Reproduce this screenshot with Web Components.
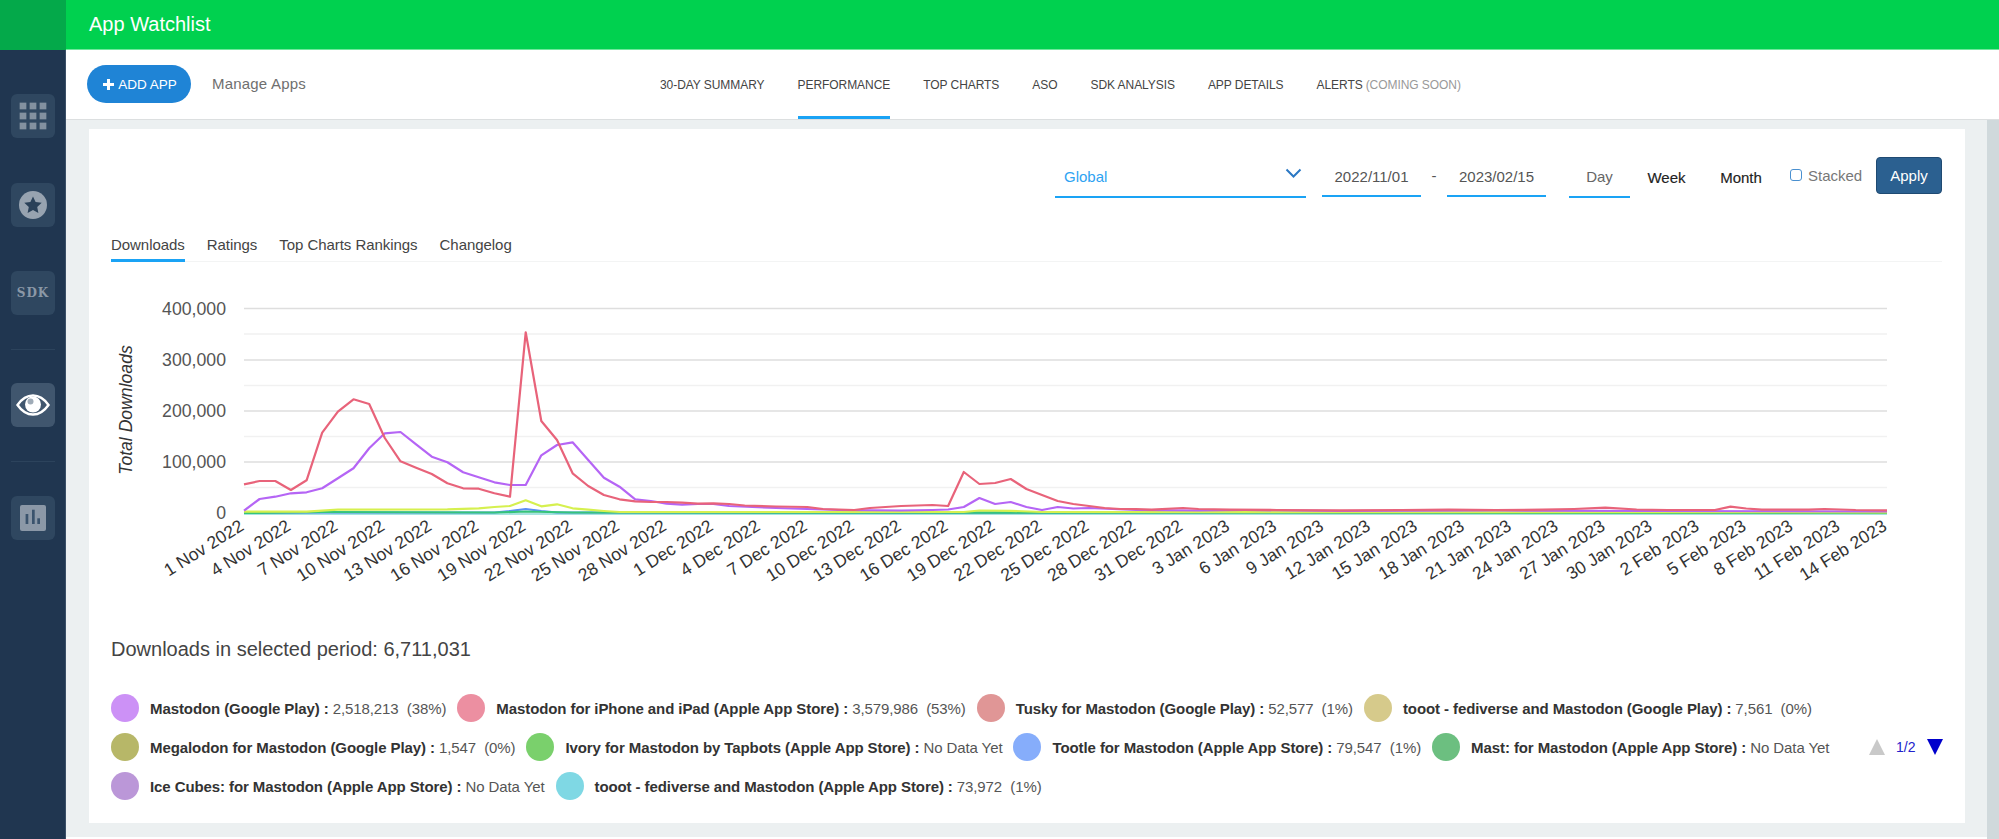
<!DOCTYPE html>
<html>
<head>
<meta charset="utf-8">
<title>App Watchlist</title>
<style>
  html, body { margin: 0; height: 839px; overflow: hidden; }
  body { font-family: "Liberation Sans", Arial, sans-serif; color: #333; background: #fff; }
  .page { display: flex; flex-direction: column; height: 839px; }
  .body-row { display: flex; flex: 1; min-height: 0; }
  .main { flex: 1; display: flex; flex-direction: column; min-width: 0; }
  .content-row { flex: 1; display: flex; min-height: 0; }
  .scrollbar { width: 12px; background: #d0d9dc; }
</style>
</head>
<body>
<div class="page">
  <app-header>App Watchlist</app-header>
  <div class="body-row">
    <side-bar>
      <side-tile style="margin-top:44px"><svg width="28" height="28" viewBox="0 0 28 28" fill="#8391a0"><rect x="0.650" y="0.650" width="6.700" height="6.700"/><rect x="10.650" y="0.650" width="6.700" height="6.700"/><rect x="20.650" y="0.650" width="6.700" height="6.700"/><rect x="0.650" y="10.650" width="6.700" height="6.700"/><rect x="10.650" y="10.650" width="6.700" height="6.700"/><rect x="20.650" y="10.650" width="6.700" height="6.700"/><rect x="0.650" y="20.650" width="6.700" height="6.700"/><rect x="10.650" y="20.650" width="6.700" height="6.700"/><rect x="20.650" y="20.650" width="6.700" height="6.700"/></svg></side-tile>
      <side-tile style="margin-top:45px"><svg width="28" height="28" viewBox="0 0 28 28"><circle cx="14" cy="14" r="14" fill="#97a3b0"/><path d="M14 5.500l2.600 5.600 6.100.7-4.500 4.200 1.200 6-5.400-3-5.400 3 1.200-6-4.500-4.200 6.100-.7z" fill="#2a4159"/></svg></side-tile>
      <side-tile style="margin-top:44px"><span class="sdk" style="font:bold 12px 'DejaVu Serif',serif;color:#8b98a7;letter-spacing:1px">SDK</span></side-tile>
      <side-rule style="margin-top:34px"></side-rule>
      <side-tile active style="margin-top:33px"><svg width="34" height="22" viewBox="0 0 34 22"><path d="M1.500 11C6 4.500 11 1.500 17 1.500S28 4.500 32.500 11C28 17.500 23 20.500 17 20.500S6 17.500 1.500 11Z" fill="none" stroke="#fff" stroke-width="2.400"/><circle cx="17" cy="10.500" r="8" fill="#fff"/><circle cx="14.500" cy="7.500" r="3" fill="#9fabb7"/></svg></side-tile>
      <side-rule style="margin-top:34px"></side-rule>
      <side-tile style="margin-top:34px"><svg width="26" height="26" viewBox="0 0 26 26"><rect width="26" height="26" rx="2" fill="#8b98a7"/><rect x="5.600" y="9" width="2.700" height="10" fill="#3a536d"/><rect x="12" y="4.700" width="2.700" height="14.300" fill="#3a536d"/><rect x="17.300" y="13.300" width="2.700" height="5.700" fill="#3a536d"/></svg></side-tile>
    </side-bar>
    <div class="main">
      <sub-nav></sub-nav>
      <div class="content-row">
        <watch-card>
          <filter-bar></filter-bar>
          <chart-tabs></chart-tabs>
          <downloads-chart></downloads-chart>
          <app-legend total="6,711,031">
            <legend-item color="#cc91f6" name="Mastodon (Google Play)">2,518,213 &nbsp;(38%)</legend-item>
            <legend-item color="#ec8fa1" name="Mastodon for iPhone and iPad (Apple App Store)">3,579,986 &nbsp;(53%)</legend-item>
            <legend-item color="#e09696" name="Tusky for Mastodon (Google Play)">52,577 &nbsp;(1%)</legend-item>
            <legend-item color="#d6ca8b" name="tooot - fediverse and Mastodon (Google Play)">7,561 &nbsp;(0%)</legend-item>
            <legend-item color="#b7b768" name="Megalodon for Mastodon (Google Play)">1,547 &nbsp;(0%)</legend-item>
            <legend-item color="#7ad06c" name="Ivory for Mastodon by Tapbots (Apple App Store)">No Data Yet</legend-item>
            <legend-item color="#86adfb" name="Tootle for Mastodon (Apple App Store)">79,547 &nbsp;(1%)</legend-item>
            <legend-item color="#6cbf80" name="Mast: for Mastodon (Apple App Store)">No Data Yet</legend-item>
            <legend-item color="#bb97d8" name="Ice Cubes: for Mastodon (Apple App Store)">No Data Yet</legend-item>
            <legend-item color="#7fd8e4" name="tooot - fediverse and Mastodon (Apple App Store)">73,972 &nbsp;(1%)</legend-item>
          </app-legend>
        </watch-card>
        <div class="scrollbar"></div>
      </div>
    </div>
  </div>
</div>

<script>
class AppHeader extends HTMLElement {
  constructor() {
    super();
    this.attachShadow({ mode: 'open' });
    this.shadowRoot.innerHTML = `
      <style>
        :host { display: flex; height: 50px; background: #00d14f; box-sizing: border-box; border-bottom: 1px solid #6fe79c; }
        .corner { width: 66px; background: #04a94a; margin-bottom: -1px; }
        .title { margin-left: 23px; color: #fff; font-size: 20px; line-height: 48px; }
      </style>
      <div class="corner"></div>
      <div class="title"><slot></slot></div>`;
  }
}
customElements.define('app-header', AppHeader);

class SideBar extends HTMLElement {
  constructor() {
    super();
    this.attachShadow({ mode: 'open' });
    this.shadowRoot.innerHTML = `
      <style>
        :host { display: flex; flex-direction: column; align-items: center; width: 66px; flex: none; background: #203650; box-shadow: inset -1px 0 0 #3b5068; }
      </style>
      <slot></slot>`;
  }
}
customElements.define('side-bar', SideBar);

class SideTile extends HTMLElement {
  constructor() {
    super();
    this.attachShadow({ mode: 'open' });
    this.shadowRoot.innerHTML = `
      <style>
        :host { display: flex; align-items: center; justify-content: center; width: 44px; height: 44px; border-radius: 6px; background: #2f4760; }
        :host([active]) { background: #40566e; }
      </style>
      <slot></slot>`;
  }
}
customElements.define('side-tile', SideTile);

class SideRule extends HTMLElement {
  constructor() {
    super();
    this.attachShadow({ mode: 'open' });
    this.shadowRoot.innerHTML = `<style>:host { display: block; width: 44px; height: 1px; background: #2c435c; }</style>`;
  }
}
customElements.define('side-rule', SideRule);

class SubNav extends HTMLElement {
  constructor() {
    super();
    this.attachShadow({ mode: 'open' });
    this.shadowRoot.innerHTML = `
      <style>
        :host { display: flex; align-items: stretch; height: 70px; flex: none; box-sizing: border-box; background: #fff; border-bottom: 1px solid #dcdfe0; padding-left: 21px; }
        .add { align-self: center; margin-top: -1px; width: 104px; height: 38px; border-radius: 19px; background: #1f84d6; color: #fff; font-size: 13.500px; display: flex; align-items: center; justify-content: center; gap: 4px; padding-left: 2px; box-sizing: border-box; }
        .add svg { display: block; }
        .manage { align-self: center; margin: -3px 0 0 21px; font-size: 15px; letter-spacing: .2px; color: #6f6f6f; width: 93px; white-space: nowrap; }
        nav { display: flex; gap: 33px; margin-left: 355px; font-size: 12px; letter-spacing: -.06px; color: #444; white-space: nowrap; }
        nav a { display: flex; align-items: center; padding-top: 3px; box-sizing: border-box; height: 69px; border-bottom: 3px solid transparent; }
        nav a.on { border-bottom-color: #1aa3f5; }
        nav em { font-style: normal; color: #999; margin-left: 3px; }
      </style>
      <div class="add"><svg width="11" height="11" viewBox="0 0 11 11" fill="#fff"><rect x="4" width="3" height="11"/><rect y="4" width="11" height="3"/></svg>ADD APP</div>
      <div class="manage">Manage Apps</div>
      <nav>
        <a>30-DAY SUMMARY</a><a class="on">PERFORMANCE</a><a>TOP CHARTS</a><a>ASO</a><a>SDK ANALYSIS</a><a>APP DETAILS</a><a>ALERTS<em>(COMING SOON)</em></a>
      </nav>`;
  }
}
customElements.define('sub-nav', SubNav);

class WatchCard extends HTMLElement {
  constructor() {
    super();
    this.attachShadow({ mode: 'open' });
    this.shadowRoot.innerHTML = `
      <style>
        :host { display: block; flex: 1; min-width: 0; background: #ecf0f1; padding: 9px 22px 14px 23px; margin-bottom: 2px; box-sizing: border-box; }
        .card { background: #fff; height: 694px; box-sizing: border-box; padding: 28px 23px 0 22px; }
      </style>
      <div class="card"><slot></slot></div>`;
  }
}
customElements.define('watch-card', WatchCard);

class FilterBar extends HTMLElement {
  constructor() {
    super();
    this.attachShadow({ mode: 'open' });
    this.shadowRoot.innerHTML = `
      <style>
        :host { display: flex; justify-content: flex-end; height: 41px; font-size: 15px; color: #555; }
        .field { box-sizing: border-box; height: 40px; border-bottom: 2px solid #1aa3f5; display: flex; align-items: center; }
        .select { width: 251px; height: 41px; padding: 0 4px 0 9px; justify-content: space-between; color: #2ea3f2; }
        .date { width: 99px; margin-left: 16px; justify-content: center; padding-top: 1px; }
        .dash { width: 26px; text-align: center; line-height: 37px; }
        .date.second { margin-left: 0; }
        .seg { display: flex; margin-left: 23px; margin-right: 11px; }
        .seg div { height: 41px; box-sizing: border-box; display: flex; align-items: center; justify-content: center; font-size: 15px; color: #222; }
        .seg .day { width: 61px; border-bottom: 2px solid #1aa3f5; color: #666; }
        .seg .week { width: 73px; -webkit-text-stroke: .15px #222; }
        .seg .month { width: 76px; -webkit-text-stroke: .15px #222; }
        .stacked { display: flex; align-items: center; height: 36px; gap: 6px; color: #777; width: 86px; }
        .box { box-sizing: border-box; width: 12px; height: 12px; border: 1.500px solid #4a90d0; border-radius: 3px; }
        .apply { box-sizing: border-box; width: 66px; height: 37px; background: #2b6090; border: 1px solid #1f4a72; border-radius: 4px; color: #fff; display: flex; align-items: center; justify-content: center; }
      </style>
      <div class="field select">Global<svg width="17" height="11" viewBox="0 0 17 11" style="margin-top:-6px"><path d="M1.500 1.500L8.500 8.500L15.500 1.500" fill="none" stroke="#2b78c4" stroke-width="2"/></svg></div>
      <div class="field date">2022/11/01</div>
      <div class="dash">-</div>
      <div class="field date second">2023/02/15</div>
      <div class="seg"><div class="day">Day</div><div class="week">Week</div><div class="month">Month</div></div>
      <div class="stacked"><span class="box"></span>Stacked</div>
      <div class="apply">Apply</div>`;
  }
}
customElements.define('filter-bar', FilterBar);

class ChartTabs extends HTMLElement {
  constructor() {
    super();
    this.attachShadow({ mode: 'open' });
    this.shadowRoot.innerHTML = `
      <style>
        :host { display: flex; gap: 22px; height: 34px; margin-top: 29px; box-sizing: content-box; border-bottom: 1px solid #f3f4f4; font-size: 15px; letter-spacing: -.05px; color: #444; }
        a { display: block; box-sizing: border-box; height: 35px; padding-top: 9px; }
        a.on { border-bottom: 3px solid #1aa3f5; }
      </style>
      <a class="on">Downloads</a><a>Ratings</a><a>Top Charts Rankings</a><a>Changelog</a>`;
  }
}
customElements.define('chart-tabs', ChartTabs);

// line data, read off the reference in page pixels: [day index, y]
const PINK = [484.3,481,481,490,480.3,432.7,411.7,399.3,404,438,461.3,467.7,474,483.3,488.3,488.7,493.3,496.7,332.3,421,440,473.3,486,495,499.3,501.3,502,502,502.7,503.7,503.3,504]
  .map((y, i) => [i, y]).concat([[32,505.5],[34,506.5],[36,507],[37,509],[39,510],[40,508],[42,506],[44,505],[45,506],[46,472],[47,484],[48,483],[49,479],[50,489],[51,495],[52,501],[53,504],[54,506],[55,508],[56,509],[57,509],[58,509.7],[60,508],[61,509],[63,509.7],[66,510],[70,510.3],[74,510],[77,509.7],[80,510],[83,509.7],[85,509],[87,507.7],[89,509.5],[91,510],[94,510],[95,506.7],[96,508.5],[97,509.7],[100,509.7],[101,509],[103,510],[105,510.3]]);
const PURPLE = [510.7,499,496.7,493.3,492.3,488.3,478.3,468.3,448.3,433.3,432,444.3,456.7,462.3,472.3,477.3,482.3,485,485,455.3,445,442.3,460,477.7,486.7,499.3,501,503.7,504.7,504,504,506]
  .map((y, i) => [i, y]).concat([[34,508],[38,510],[42,510.5],[44,510],[45,509.5],[46,507],[47,498],[48,504],[49,502],[50,507],[51,510],[52,507],[53,508.5],[54,508],[57,510],[61,510.5],[64,510],[70,511],[80,510.5],[90,511],[105,511.5]]);
const LIME = [[0,511.7],[4,511.7],[5,510.7],[6,509.7],[13,509.3],[15,508.3],[16,507],[17,506],[18,500.3],[19,506.3],[20,504.3],[21,508.3],[22,509.7],[23,511],[24,512],[46,512],[47,510.5],[49,510.8],[51,512],[105,512.3]];
const BLUE = [[0,513],[5,512.5],[16,512.5],[17,511],[18,509],[19,511],[20,512.5],[105,513]];
const GREEN = [[0,513],[5,512],[16,512.5],[18,511.5],[21,512.5],[105,513]];
const TEAL = [[0,514],[105,514]];
const LABELS = ['1 Nov 2022','4 Nov 2022','7 Nov 2022','10 Nov 2022','13 Nov 2022','16 Nov 2022','19 Nov 2022','22 Nov 2022','25 Nov 2022','28 Nov 2022','1 Dec 2022','4 Dec 2022','7 Dec 2022','10 Dec 2022','13 Dec 2022','16 Dec 2022','19 Dec 2022','22 Dec 2022','25 Dec 2022','28 Dec 2022','31 Dec 2022','3 Jan 2023','6 Jan 2023','9 Jan 2023','12 Jan 2023','15 Jan 2023','18 Jan 2023','21 Jan 2023','24 Jan 2023','27 Jan 2023','30 Jan 2023','2 Feb 2023','5 Feb 2023','8 Feb 2023','11 Feb 2023','14 Feb 2023'];

class DownloadsChart extends HTMLElement {
  constructor() {
    super();
    this.attachShadow({ mode: 'open' });
    const x0 = 244, x1 = 1887, step = (x1 - x0) / 105;
    const line = (pts, color) => `<polyline fill="none" stroke="${color}" stroke-width="2.200" stroke-linejoin="round" points="${pts.map(p => `${(x0 + p[0] * step).toFixed(1)},${p[1]}`).join(' ')}"/>`;
    let grid = '', yLabels = '', xLabels = '';
    [[308.5,'400,000'],[334],[360,'300,000'],[385.5],[411,'200,000'],[436.5],[462,'100,000'],[487.5],[513,'0']].forEach(g => {
      grid += `<line x1="${x0}" x2="${x1}" y1="${g[0]}" y2="${g[0]}" stroke="${g[1] ? '#dedede' : '#f1f1f1'}" stroke-width="1.500"/>`;
      if (g[1]) yLabels += `<text x="226" y="${g[0] + 6}" text-anchor="end" font-size="17.700" fill="#555">${g[1]}</text>`;
    });
    LABELS.forEach((t, i) => {
      const x = x0 + i * 3 * step + 1;
      xLabels += `<text transform="translate(${x.toFixed(1)} 529) rotate(-32)" text-anchor="end" font-size="17.600" fill="#333">${t}</text>`;
    });
    this.shadowRoot.innerHTML = `
      <style>
        :host { display: block; height: 338px; }
        svg { display: block; overflow: visible; font-family: "Liberation Sans", Arial, sans-serif; }
      </style>
      <svg width="1854" height="338" viewBox="111 262 1854 338">
        ${grid}${yLabels}
        <text transform="translate(132 410) rotate(-90)" text-anchor="middle" font-size="17.600" font-style="italic" fill="#333">Total Downloads</text>
        ${line(TEAL, '#a5e3e0')}${line(BLUE, '#5b8ef5')}${line(GREEN, '#35c47a')}${line(LIME, '#d6f04f')}
        ${line(PURPLE, '#b565f5')}${line(PINK, '#e8637a')}
        ${xLabels}
      </svg>`;
  }
}
customElements.define('downloads-chart', DownloadsChart);

class AppLegend extends HTMLElement {
  constructor() {
    super();
    this.attachShadow({ mode: 'open' });
    this.shadowRoot.innerHTML = `
      <style>
        :host { display: block; }
        .total { font-size: 20px; color: #444; margin-top: 38px; line-height: 22px; }
        .rows { display: flex; align-items: center; margin-top: 34px; }
        .items { flex: none; width: 1748px; display: flex; flex-wrap: wrap; gap: 11px 11px; align-content: flex-start; }
        .pager { margin-left: 10px; display: flex; align-items: center; height: 17px; color: #2222cc; font-size: 14px; }
        .up { width: 0; height: 0; border: 8px solid transparent; border-top: 0; border-bottom: 16px solid #c9c9c9; }
        .num { margin: 0 12px 0 11px; }
        .down { width: 0; height: 0; border: 8px solid transparent; border-bottom: 0; border-top: 16px solid #0000cc; }
      </style>
      <div class="total">Downloads in selected period: ${this.getAttribute('total')}</div>
      <div class="rows">
        <div class="items"><slot></slot></div>
        <div class="pager"><span class="up"></span><span class="num">1/2</span><span class="down"></span></div>
      </div>`;
  }
}
customElements.define('app-legend', AppLegend);

class LegendItem extends HTMLElement {
  constructor() {
    super();
    this.attachShadow({ mode: 'open' });
    this.shadowRoot.innerHTML = `
      <style>
        :host { display: flex; align-items: center; height: 28px; font-size: 15px; letter-spacing: -.09px; color: #555; white-space: nowrap; }
        .dot { width: 28px; height: 28px; border-radius: 50%; margin-right: 11px; background: ${this.getAttribute('color')}; }
        b { color: #333; margin-right: 4px; }
      </style>
      <span class="dot"></span><b>${this.getAttribute('name')} :</b><slot></slot>`;
  }
}
customElements.define('legend-item', LegendItem);
</script>
</body>
</html>
